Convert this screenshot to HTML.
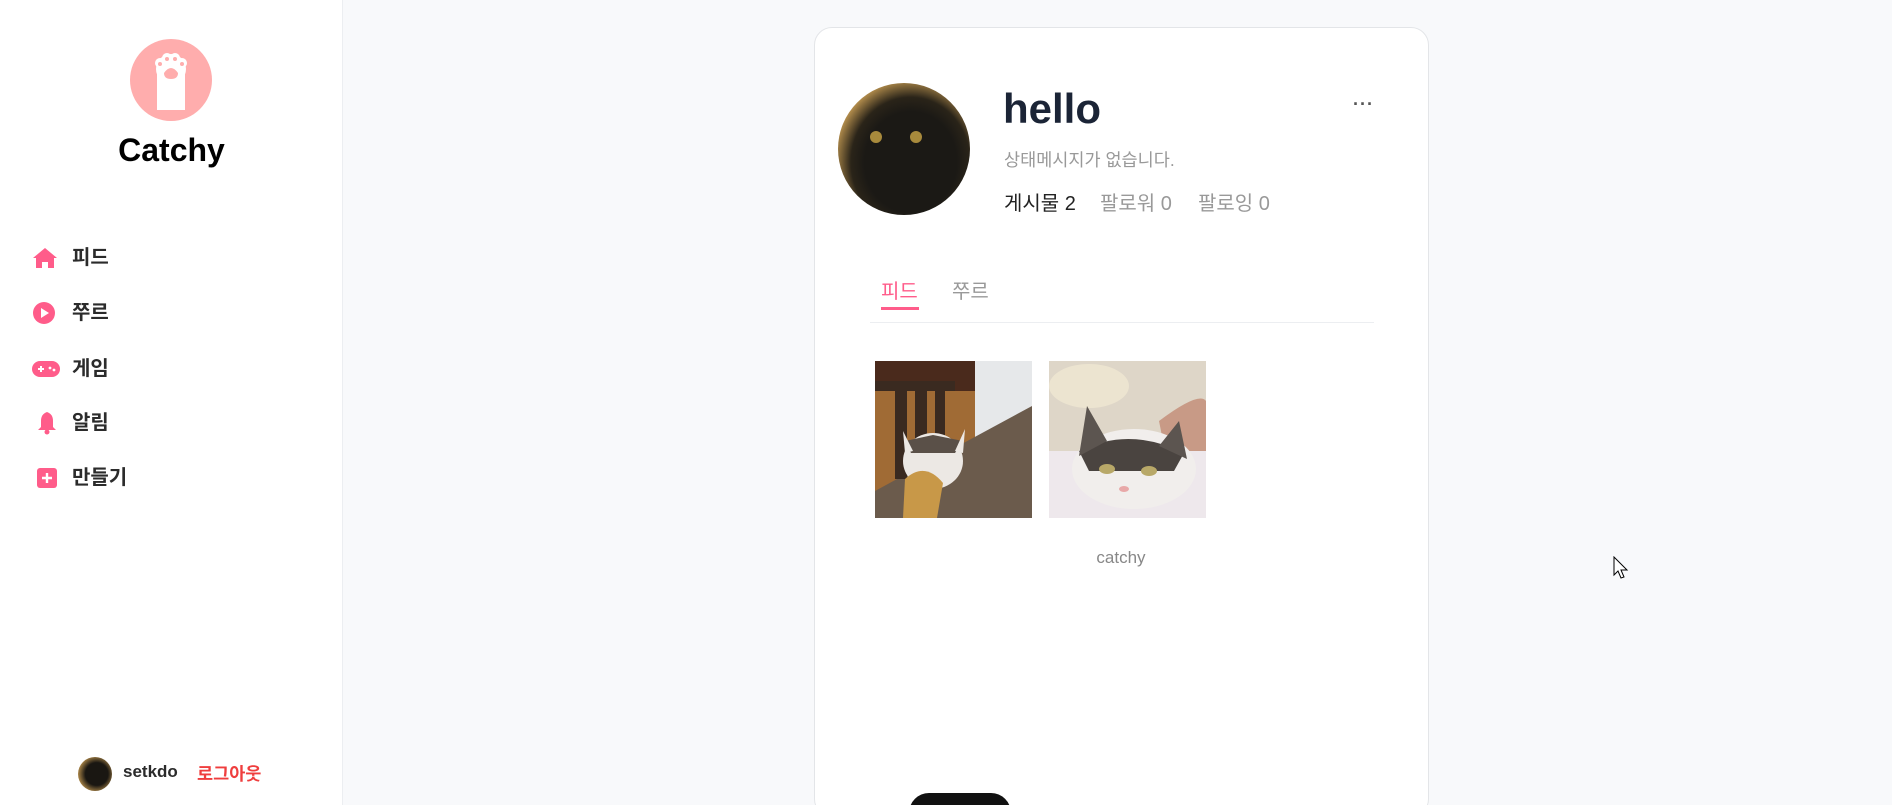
<!DOCTYPE html>
<html style="width:1892px;height:805px;overflow:hidden"><head><meta charset="utf-8"><style>
*{margin:0;padding:0;box-sizing:border-box}
body{width:1892px;height:805px;overflow:hidden;background:#f8f9fb;font-family:"Liberation Sans","Noto Sans CJK KR",sans-serif;position:relative}
.side{position:absolute;left:0;top:0;width:343px;height:805px;background:#fff;border-right:1px solid #eceef1}
.abs{position:absolute}
.nav{position:absolute;left:72px;font-size:20px;font-weight:bold;color:#2b2b2b;line-height:24px}
.card{position:absolute;left:814px;top:27px;width:615px;height:790px;background:#ffffff;border:1px solid #e3e5e8;border-radius:18px}
</style></head><body>
<div class="side">
  <svg class="abs" style="left:130px;top:39px" width="82" height="82" viewBox="0 0 82 82">
    <circle cx="41" cy="41" r="41" fill="#ffadad"/>
    <rect x="27" y="25" width="28" height="46" fill="#fff"/>
    <circle cx="41" cy="30" r="15" fill="#fff"/>
    <circle cx="30" cy="24" r="5" fill="#fff"/><circle cx="37" cy="19" r="5" fill="#fff"/><circle cx="45" cy="19" r="5" fill="#fff"/><circle cx="52" cy="24" r="5" fill="#fff"/>
    <circle cx="30" cy="25" r="2" fill="#ffadad"/><circle cx="37" cy="20" r="2" fill="#ffadad"/><circle cx="45" cy="20" r="2" fill="#ffadad"/><circle cx="52" cy="25" r="2" fill="#ffadad"/>
    <path d="M34 34 Q41 24 48 34 Q48 40 41 40 Q34 40 34 34Z" fill="#ffadad"/>
  </svg>
  <div class="abs" style="left:0;width:343px;top:132px;text-align:center;font-size:32px;font-weight:bold;color:#000">Catchy</div>

  <svg class="abs" style="left:32px;top:247px" width="26" height="22" viewBox="0 0 26 22"><path d="M13 1 L25 11 L22 11 L22 21 L16 21 L16 15 L10 15 L10 21 L4 21 L4 11 L1 11Z" fill="#ff5c8a"/></svg>
  <div class="nav" style="top:246px">피드</div>
  <svg class="abs" style="left:33px;top:302px" width="22" height="22" viewBox="0 0 22 22"><circle cx="11" cy="11" r="11" fill="#ff5c8a"/><path d="M8 6 L16 11 L8 16Z" fill="#fff"/></svg>
  <div class="nav" style="top:301px">쭈르</div>
  <svg class="abs" style="left:32px;top:361px" width="28" height="16" viewBox="0 0 28 16"><rect width="28" height="16" rx="8" fill="#ff5c8a"/><path d="M6 8h6M9 5v6" stroke="#fff" stroke-width="2"/><circle cx="18" cy="7" r="1.4" fill="#fff"/><circle cx="22" cy="9" r="1.4" fill="#fff"/></svg>
  <div class="nav" style="top:357px">게임</div>
  <svg class="abs" style="left:36px;top:411px" width="22" height="24" viewBox="0 0 22 24"><path d="M11 1 Q17 3 17 10 L17 16 L20 19 L2 19 L5 16 L5 10 Q5 3 11 1Z" fill="#ff5c8a"/><circle cx="11" cy="21" r="2.5" fill="#ff5c8a"/></svg>
  <div class="nav" style="top:411px">알림</div>
  <svg class="abs" style="left:37px;top:468px" width="20" height="20" viewBox="0 0 20 20"><rect width="20" height="20" rx="3" fill="#ff5c8a"/><path d="M10 5v10M5 10h10" stroke="#fff" stroke-width="2.4"/></svg>
  <div class="nav" style="top:466px">만들기</div>

  <div class="abs" style="left:78px;top:757px;width:34px;height:34px;border-radius:50%;background:radial-gradient(circle at 55% 50%,#1a1712 45%,#b08a4a 75%)"></div>
  <div class="abs" style="left:123px;top:762px;font-size:17px;font-weight:bold;color:#2b2b2b">setkdo</div>
  <div class="abs" style="left:197px;top:761px;font-size:17.5px;font-weight:bold;color:#ef3e3e">로그아웃</div>
</div>

<div class="card"></div>
<div class="abs" style="left:838px;top:83px;width:132px;height:132px;border-radius:50%;background:radial-gradient(ellipse at 55% 60%,#1b1915 45%,#2a2419 58%,#b8914e 75%);overflow:hidden">
  <div class="abs" style="left:32px;top:48px;width:12px;height:12px;border-radius:50%;background:#a88a3c"></div>
  <div class="abs" style="left:72px;top:48px;width:12px;height:12px;border-radius:50%;background:#a88a3c"></div>
</div>
<div class="abs" style="left:1003px;top:84px;font-size:42px;font-weight:bold;color:#1b2436;line-height:50px">hello</div>
<div class="abs" style="left:1353px;top:94px;font-size:18px;color:#555;letter-spacing:1px;font-weight:bold">···</div>
<div class="abs" style="left:1004px;top:150px;font-size:17.5px;color:#999;line-height:20px">상태메시지가 없습니다.</div>
<div class="abs" style="left:1004px;top:192px;font-size:20px;color:#222;line-height:24px">게시물 2</div>
<div class="abs" style="left:1100px;top:192px;font-size:20px;color:#999;line-height:24px">팔로워 0</div>
<div class="abs" style="left:1198px;top:192px;font-size:20px;color:#999;line-height:24px">팔로잉 0</div>
<div class="abs" style="left:881px;top:280px;font-size:20px;color:#ff5c8a;line-height:24px">피드</div>
<div class="abs" style="left:881px;top:307px;width:38px;height:3px;background:#ff5c8a"></div>
<div class="abs" style="left:952px;top:280px;font-size:20px;color:#999;line-height:24px">쭈르</div>
<div class="abs" style="left:870px;top:322px;width:504px;height:1px;background:#eceef1"></div>

<svg class="abs" style="left:875px;top:361px" width="157" height="157" viewBox="0 0 157 157">
  <rect width="157" height="157" fill="#a06b35"/>
  <rect width="157" height="30" fill="#4a2a1c"/>
  <rect x="100" y="0" width="57" height="80" fill="#e6e8ea"/>
  <path d="M0 130 L157 45 L157 157 L0 157Z" fill="#6b5b4c"/>
  <rect x="0" y="20" width="80" height="10" fill="#3a2a20"/><rect x="20" y="28" width="12" height="90" fill="#3a2a20"/><rect x="40" y="28" width="12" height="80" fill="#3a2a20"/><rect x="60" y="28" width="10" height="70" fill="#3a2a20"/>
  <ellipse cx="58" cy="100" rx="30" ry="28" fill="#ece8e4"/>
  <path d="M30 80 L58 74 L88 80 L80 92 L36 92Z" fill="#5a5048"/>
  <path d="M28 70 L38 90 L30 92Z M90 68 L80 90 L88 92Z" fill="#ece8e4"/>
  <path d="M30 118 Q50 100 68 122 L62 157 L28 157Z" fill="#c89848"/>
</svg>
<svg class="abs" style="left:1049px;top:361px" width="157" height="157" viewBox="0 0 157 157">
  <rect width="157" height="157" fill="#ded6c8"/>
  <ellipse cx="40" cy="25" rx="40" ry="22" fill="#ece4d0"/>
  <path d="M110 60 Q150 30 157 40 L157 120 L120 110Z" fill="#c89a86"/>
  <rect x="0" y="90" width="157" height="67" fill="#eee8ec"/>
  <ellipse cx="85" cy="108" rx="62" ry="40" fill="#f1eeec"/>
  <path d="M30 90 Q80 65 135 92 L125 110 L40 110Z" fill="#4a4440"/>
  <path d="M38 45 L58 80 L30 95Z M130 60 L110 85 L138 98Z" fill="#5c5550"/>
  <ellipse cx="58" cy="108" rx="8" ry="5" fill="#b8a868"/><ellipse cx="100" cy="110" rx="8" ry="5" fill="#b8a868"/>
  <ellipse cx="75" cy="128" rx="5" ry="3" fill="#e8a8a8"/>
</svg>
<div class="abs" style="left:1060px;top:548px;width:122px;text-align:center;font-size:17px;color:#888">catchy</div>

<div class="abs" style="left:909px;top:793px;width:102px;height:40px;border-radius:20px;background:#111"></div>
<svg class="abs" style="left:1613px;top:556px" width="16" height="24" viewBox="0 0 16 24"><path d="M1 1 L1 19 L5 15 L8 22 L11 21 L8 14 L14 14Z" fill="#fff" stroke="#000" stroke-width="1"/></svg>
</body></html>
